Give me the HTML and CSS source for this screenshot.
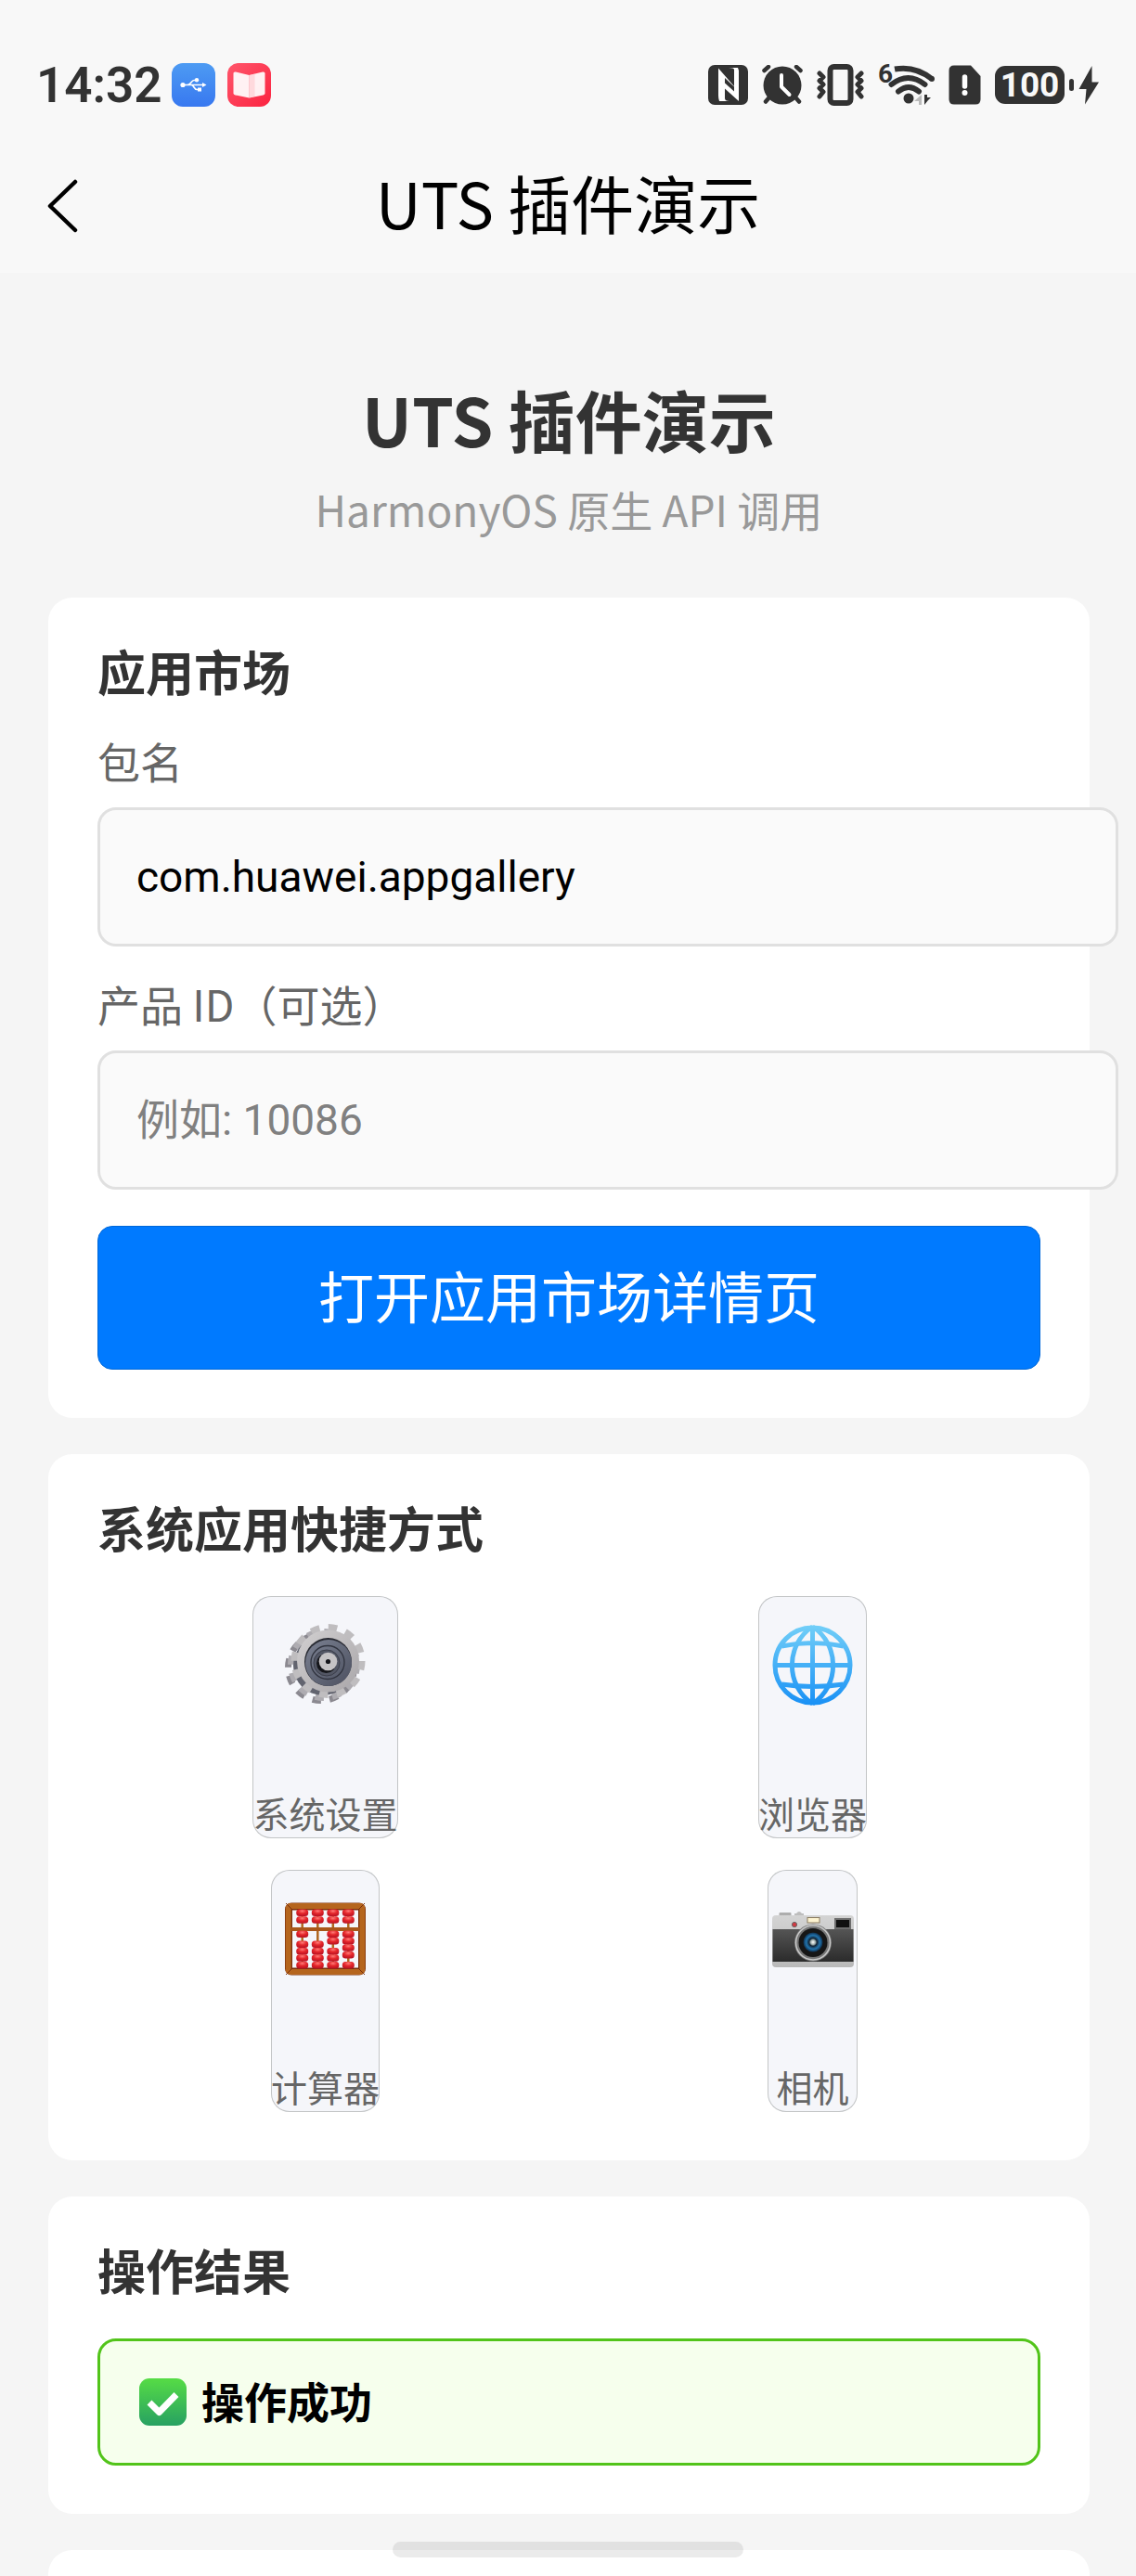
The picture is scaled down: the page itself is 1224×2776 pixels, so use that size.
FILE: index.html
```
<!DOCTYPE html>
<html lang="zh-CN">
<head>
<meta charset="utf-8">
<meta name="viewport" content="width=device-width, initial-scale=1">
<title>UTS 插件演示</title>
<link rel="stylesheet" href="styles.css">
</head>

<body>
<div class="m-top">
	<div class="status">
		<span class="time">14:32</span>
		<svg class="app" width="47" height="47" viewBox="0 0 47 47">
			<defs><linearGradient id="usb" x1="0" y1="0" x2="0" y2="1"><stop offset="0" stop-color="#4d9bf3"/><stop offset="1" stop-color="#3878f0"/></linearGradient></defs>
			<rect width="47" height="47" rx="12" fill="url(#usb)"/>
			<path d="M12 23.5h22M17 23.5c4 0 4-5 7-5h3M21 23.5c3 0 3 5 6 5h3" fill="none" stroke="#fff" stroke-width="1.6"/>
			<circle cx="12" cy="23.5" r="2.6" fill="#fff"/><circle cx="27" cy="18.2" r="2.2" fill="#fff"/><rect x="28" y="26.5" width="4" height="4" fill="#fff"/>
			<path d="M33 21l4.500 2.500-4.500 2.500z" fill="#fff"/>
		</svg>
		<svg class="app" width="47" height="47" viewBox="0 0 47 47">
			<defs><linearGradient id="book" x1="0" y1="0" x2="1" y2="1"><stop offset="0" stop-color="#ff566b"/><stop offset="1" stop-color="#fb2340"/></linearGradient></defs>
			<rect width="47" height="47" rx="12" fill="url(#book)"/>
			<path d="M6.500 11q0-2 2.500-1.500l14.500 3.500v24.500l-15-3q-2-.5-2-2z" fill="#fff" fill-opacity=".93"/>
			<path d="M40.500 11q0-2-2.500-1.500l-14.500 3.500v24.500l15-3q2-.5 2-2z" fill="#fff" fill-opacity=".93"/>
			<path d="M23.500 13l6-1.500v24.500l-6 1.500z" fill="#ffc9cf" fill-opacity=".6"/>
		</svg>
		<div class="signs">
			<svg width="43" height="43" viewBox="0 0 43 43">
				<rect width="43" height="43" rx="7" fill="#323232"/>
				<path d="M11 3.500l17 19.500V5q0-2-6-2h10l1 3v33L18 25.500V36q0 3 5 3H12q-1-3-1-6z" fill="#fff"/>
				<path d="M18 14l10 9.500v5l-10-9z" fill="#323232"/>
			</svg>
			<svg width="44" height="43" viewBox="0 0 44 43">
				<circle cx="22" cy="22" r="20.500" fill="#323232"/>
				<path d="M2.500 6L7 2M41.500 6L37 2M7 36l-3 3.500M37 36l3 3.500" stroke="#323232" stroke-width="4.500" stroke-linecap="round"/>
				<path d="M21 11v12.500l8.500 8.500" fill="none" stroke="#fff" stroke-width="4" stroke-linecap="round" stroke-linejoin="round"/>
			</svg>
			<svg width="51" height="45" viewBox="0 0 51 45">
				<rect x="14.500" y="3" width="22" height="39" rx="4" fill="none" stroke="#323232" stroke-width="6"/>
				<path d="M3 10l4 4-4 4 4 4-4 4 4 4-4 5M48 10l-4 4 4 4-4 4 4 4-4 4 4 5" fill="none" stroke="#323232" stroke-width="5" stroke-linecap="round" stroke-linejoin="round"/>
			</svg>
			<div class="wifi">
				<svg width="61" height="45" viewBox="0 0 61 45">
					<path d="M18 5.500q22-4 40 10.500" fill="none" stroke="#323232" stroke-width="6"/><circle cx="58" cy="16" r="3" fill="#323232"/>
					<path d="M14.500 22q18-14 36 0M22 29.500q11-9 22 0" fill="none" stroke="#323232" stroke-width="6" stroke-linecap="round"/>
					<circle cx="33" cy="37" r="5.500" fill="#323232"/>
					<path d="M47 33v11h-3v-4h-5z" fill="#bbb"/><path d="M50 33v11l4-5 3-3h-4v-3z" fill="#323232"/>
				</svg>
				<span class="gen">6</span>
			</div>
			<svg width="35" height="43" viewBox="0 0 35 43">
				<path d="M6 .5h18L34.500 12v25q0 5.500-5.500 5.500H6Q.5 42.500.5 37V6Q.5.5 6 .5z" fill="#323232"/>
				<path d="M17.500 13v10" stroke="#fff" stroke-width="5.500" stroke-linecap="round"/><circle cx="17.500" cy="30" r="3" fill="#fff"/>
			</svg>
			<div class="battery">
				<span class="level">100</span>
				<i class="nub"></i>
				<svg width="23" height="42" viewBox="0 0 23 42"><path d="M14.500 0L.5 25h8l-1.500 16.500L22 17.500h-7.500z" fill="#323232"/></svg>
			</div>
		</div>
	</div>
	<div class="nav">
		<button class="back" type="button" aria-label="返回">
			<svg width="34" height="58" viewBox="0 0 34 58"><path d="M31 3L4 29l27 26" fill="none" stroke="#000" stroke-width="4.500" stroke-linecap="round" stroke-linejoin="round"/></svg>
		</button>
		<div class="title">UTS 插件演示</div>
	</div>
</div>

<div class="m-page">
	<div class="head">
		<h1>UTS 插件演示</h1>
		<p>HarmonyOS 原生 API 调用</p>
	</div>

	<div class="card">
		<h2>应用市场</h2>
		<label for="pkg">包名</label>
		<input id="pkg" type="text" value="com.huawei.appgallery">
		<label for="pid">产品 ID（可选）</label>
		<input id="pid" type="text" placeholder="例如: 10086">
		<button class="btn" type="button">打开应用市场详情页</button>
	</div>

	<div class="card">
		<h2>系统应用快捷方式</h2>
		<div class="grid">
			<button class="item" type="button">
				<svg width="97" height="97" viewBox="0 0 97 97">
					<defs>
						<linearGradient id="rim" x1="0" y1="0" x2="1" y2="1"><stop offset="0" stop-color="#d2d0d1"/><stop offset="1" stop-color="#a9a6a9"/></linearGradient>
						<linearGradient id="disc" x1="0" y1="0" x2="1" y2="1"><stop offset="0" stop-color="#7b8192"/><stop offset="1" stop-color="#4c5060"/></linearGradient>
					</defs>
					<circle cx="44" cy="51" r="35.500" fill="none" stroke="#8b8990" stroke-width="7" stroke-dasharray="9.300 9.300"/>
					<circle cx="47" cy="48" r="35.500" fill="none" stroke="#aeacb1" stroke-width="7" stroke-dasharray="9.300 9.300"/>
					<circle cx="46" cy="49" r="32" fill="#62646f"/>
					<circle cx="51.500" cy="44" r="36" fill="none" stroke="#bfbdbf" stroke-width="8" stroke-dasharray="9.425 9.425"/>
					<circle cx="51.500" cy="44" r="33.500" fill="url(#rim)"/>
					<ellipse cx="51.500" cy="45" rx="25.500" ry="26" fill="#292b33"/>
					<ellipse cx="52" cy="46" rx="25" ry="25" fill="url(#disc)"/>
					<circle cx="51" cy="45.500" r="18" fill="none" stroke="#30333e" stroke-width="1.300"/>
					<circle cx="50" cy="46" r="14" fill="#535765" stroke="#3a3d49"/>
					<circle cx="49.500" cy="46.500" r="10.500" fill="#15161b"/>
					<circle cx="51.500" cy="44.500" r="9.800" fill="#c5c3c5"/>
					<circle cx="51.500" cy="44.500" r="2.600" fill="#15161b"/>
				</svg>
				<span>系统设置</span>
			</button>
			<button class="item" type="button">
				<svg width="97" height="97" viewBox="0 0 97 97">
					<defs><linearGradient id="globe" gradientUnits="userSpaceOnUse" x1="0" y1="5" x2="0" y2="92"><stop offset="0" stop-color="#72cff8"/><stop offset="1" stop-color="#1890f5"/></linearGradient></defs>
					<g fill="none" stroke="url(#globe)" stroke-width="5">
						<circle cx="48.500" cy="48.500" r="40.500"/>
						<path d="M48.500 7v83M8 48.500h81M15 28q33.500-7 67 0M15 69q33.500 5 67 0"/>
						<path d="M48.500 7C19 26 19 71 48.500 90M48.500 7C78 26 78 71 48.500 90"/>
					</g>
				</svg>
				<span>浏览器</span>
			</button>
			<button class="item" type="button">
				<svg width="97" height="97" viewBox="0 0 97 97">
					<defs>
						<radialGradient id="bead" cx=".5" cy=".25" r=".7"><stop offset="0" stop-color="#ff7b78"/><stop offset=".5" stop-color="#e5262b"/><stop offset="1" stop-color="#bd1424"/></radialGradient>
						<rect id="b" x="-6.500" y="-3.700" width="13" height="7.400" rx="3.500" fill="url(#bead)"/>
					</defs>
					<path d="M23.700 17v63M40.300 17v63M56.800 17v63M73.300 17v63" stroke="#b0671f" stroke-width="2.500"/>
					<rect x="9" y="13.500" width="79" height="70" rx="3" fill="none" stroke="#7b2e0c" stroke-width="8"/>
					<rect x="8.700" y="13" width="79.600" height="71" rx="2" fill="none" stroke="#b5651d" stroke-width="6"/>
					<path d="M12 38h73" stroke="#a9571a" stroke-width="4"/>
					<path d="M6 10l7 7M91 10l-7 7M6 87l7-7M91 87l-7-7" stroke="#7b2e0c"/>
					<use href="#b" x="23.700" y="20.300"/><use href="#b" x="23.700" y="28"/><use href="#b" x="40.300" y="20.300"/><use href="#b" x="40.300" y="28"/>
					<use href="#b" x="56.800" y="20.300"/><use href="#b" x="56.800" y="28"/><use href="#b" x="73.300" y="20.300"/><use href="#b" x="73.300" y="28"/>
					<use href="#b" x="23.700" y="43.300"/><use href="#b" x="23.700" y="54.300"/><use href="#b" x="23.700" y="61.700"/><use href="#b" x="23.700" y="69"/><use href="#b" x="23.700" y="76.700"/>
					<use href="#b" x="40.300" y="54.300"/><use href="#b" x="40.300" y="61.700"/><use href="#b" x="40.300" y="69"/><use href="#b" x="40.300" y="76.700"/>
					<use href="#b" x="56.800" y="43.300"/><use href="#b" x="56.800" y="50.700"/><use href="#b" x="56.800" y="61.700"/><use href="#b" x="56.800" y="69"/><use href="#b" x="56.800" y="76.700"/>
					<use href="#b" x="73.300" y="43.300"/><use href="#b" x="73.300" y="50.700"/><use href="#b" x="73.300" y="58"/><use href="#b" x="73.300" y="65.700"/><use href="#b" x="73.300" y="76.700"/>
				</svg>
				<span>计算器</span>
			</button>
			<button class="item" type="button">
				<svg width="97" height="97" viewBox="0 0 97 97">
					<defs>
						<linearGradient id="band" x1="0" y1="0" x2="0" y2="1"><stop offset="0" stop-color="#555"/><stop offset="1" stop-color="#2b2b2b"/></linearGradient>
						<linearGradient id="body" x1="0" y1="0" x2="0" y2="1"><stop offset="0" stop-color="#d4d4d4"/><stop offset="1" stop-color="#b9b9b9"/></linearGradient>
						<radialGradient id="glass"><stop offset="0" stop-color="#fff"/><stop offset=".25" stop-color="#9aa"/><stop offset=".4" stop-color="#123"/><stop offset=".7" stop-color="#2274ad"/><stop offset="1" stop-color="#0e2f4e"/></radialGradient>
					</defs>
					<rect x="12.500" y="20" width="13" height="4" rx="1" fill="#adadad"/>
					<path d="M29 23v-2h2q3-4 6 0h2v2z" fill="#bdbdbd"/>
					<rect x="5" y="23" width="88" height="56" rx="4" fill="url(#body)"/>
					<rect x="5.500" y="38" width="87" height="35" fill="url(#band)"/>
					<rect x="43" y="25.500" width="13" height="5.500" fill="#fdf3d0" stroke="#8a7b60"/>
					<circle cx="29" cy="33" r="2.600" fill="#d33a42" stroke="#666"/>
					<rect x="73" y="27" width="16" height="10" fill="#111" stroke="#6d6d6d" stroke-width="2"/>
					<circle cx="49" cy="52.500" r="20" fill="#777"/>
					<circle cx="49" cy="52.500" r="18.500" fill="none" stroke="#c9c9c9" stroke-width="1.500"/>
					<circle cx="49" cy="52.500" r="15.500" fill="#161616"/>
					<circle cx="49" cy="52" r="10.500" fill="url(#glass)"/>
				</svg>
				<span>相机</span>
			</button>
		</div>
	</div>

	<div class="card">
		<h2>操作结果</h2>
		<div class="result">
			<svg width="51" height="51" viewBox="0 0 51 51">
				<defs><linearGradient id="ok" x1="0" y1="0" x2="0" y2="1"><stop offset="0" stop-color="#56dc45"/><stop offset="1" stop-color="#27a162"/></linearGradient></defs>
				<rect width="51" height="51" rx="11" fill="url(#ok)"/>
				<path d="M11 26l10.500 10.500L40 17.500" fill="none" stroke="#fff" stroke-width="7" stroke-linejoin="round"/>
			</svg>
			<span>操作成功</span>
		</div>
	</div>

	<div class="card card-last"></div>
</div>
<div class="homebar"></div>
</body>
</html>
```
FILE: styles.css
```
*{margin:0;padding:0;}
body{display:flex;flex-direction:column;min-height:100vh;background:#f5f5f5;color:#333;font-family:"Noto Sans CJK SC",sans-serif;}
button,input{font-family:inherit;}
svg{display:block;flex:none;}

/** 状态栏和导航栏 **/
.m-top{background:#f8f8f8;}
.status{display:flex;align-items:center;gap:13px;height:150px;padding:33px 39px 0;box-sizing:border-box;}
.time{margin-right:-3px;font:600 53px/60px Roboto,sans-serif;color:#323232;}
.signs{display:flex;align-items:center;gap:15px;margin-left:auto;}
.wifi{position:relative;}
.gen{position:absolute;left:0;top:-4px;font:700 28px/30px Roboto,sans-serif;color:#323232;}
.battery{display:flex;align-items:center;gap:5px;}
.level{width:75px;height:41px;border-radius:11px;background:#323232;color:#f8f8f8;font:700 37px/42px Roboto,sans-serif;text-align:center;}
.nub{width:5px;height:13px;border-radius:3px;background:#323232;}
.nav{display:grid;grid-template-columns:100px 1fr 100px;align-items:center;height:144px;}
.back{display:flex;padding-left:50px;border:0;background:none;}
.title{padding-bottom:8px;font-size:68px;line-height:80px;text-align:center;color:#000;}

/** 页面内容 **/
.m-page{flex:1;display:flex;flex-direction:column;gap:39px;padding:0 50px 0 52px;}
.head{padding:115px 0 30px;text-align:center;}
.head h1{font-size:72px;line-height:84px;}
.head p{margin-top:28px;font-size:46px;line-height:54px;color:#999;}

.card{padding:48px 53px 52px;border-radius:26px;background:#fff;}
.card-last{flex:1;padding:0;border-radius:26px 26px 0 0;}
.card h2{margin-bottom:44px;font-size:52px;line-height:61px;}
.card label{display:block;margin:-4px 0 24px;font-size:46px;line-height:53px;color:#666;}
.card input{display:block;width:100%;height:144px;margin-bottom:39px;padding:0 39px;border:3px solid #e0e0e0;border-radius:20px;background:#fafafa;font-family:Roboto,"Noto Sans CJK SC",sans-serif;font-size:46px;color:#000;}
.card input::placeholder{color:#808080;}
.btn{display:block;width:100%;height:155px;padding-bottom:8px;border:1px solid #0068d9;border-radius:16px;background:#007aff;font-size:60px;color:#fff;}

/** 快捷方式 **/
.grid{display:grid;grid-template-columns:1fr 1fr;gap:34px;justify-items:center;}
.item{display:flex;flex-direction:column;align-items:center;justify-content:space-between;height:261px;padding:26px 0 2px;box-sizing:border-box;border:0;box-shadow:inset 0 0 0 1px #c3c5c6;border-radius:20px;background:#f5f6fa;font-size:39px;line-height:52px;color:#666;}

/** 操作结果 **/
.result{display:flex;align-items:center;gap:16px;height:131px;padding:0 42px;border:3px solid #52c41a;border-radius:20px;background:#f6ffed;font-size:46px;font-weight:bold;color:#000;}
.result span{padding-bottom:5px;}

.homebar{position:fixed;left:50%;bottom:20px;width:378px;height:17px;margin-left:-189px;border-radius:9px;background:rgba(0,0,0,.08);}
```
